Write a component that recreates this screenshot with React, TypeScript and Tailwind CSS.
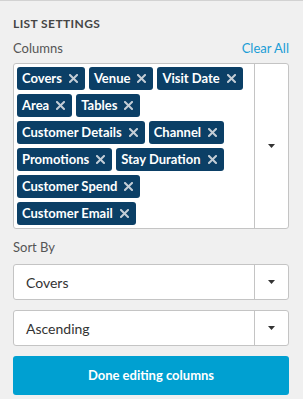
import React from "react";

const chips = [
  "Covers",
  "Venue",
  "Visit Date",
  "Area",
  "Tables",
  "Customer Details",
  "Channel",
  "Promotions",
  "Stay Duration",
  "Customer Spend",
  "Customer Email",
];

function Caret() {
  return (
    <svg width="7" height="4" viewBox="0 0 7 4">
      <path d="M0 0 L7 0 L3.5 4 Z" fill="#333" />
    </svg>
  );
}

function XIcon() {
  return (
    <svg width="9" height="9" viewBox="0 0 9 9">
      <path d="M1 1 L8 8 M8 1 L1 8" stroke="#c3cdd6" strokeWidth="2" strokeLinecap="square" />
    </svg>
  );
}

function Select({ value }: { value: string }) {
  return (
    <div className="flex h-[36px] rounded-[3px] border border-[#c4c4c4] bg-white">
      <div className="flex flex-1 items-center pl-[12px] text-[14px] text-[#333]">{value}</div>
      <div className="flex w-[34px] items-center justify-center border-l border-[#c4c4c4]">
        <Caret />
      </div>
    </div>
  );
}

export default function App() {
  return (
    <div
      className="h-[399px] w-[303px] border-t border-[#d2d2d2] bg-[#f0f0f0] pl-[13px] pr-[14px]"
      style={{ fontFamily: "Lato, 'Open Sans', sans-serif" }}
    >
      <div className="pt-[15px] text-[12px] font-bold leading-[16px] tracking-[0.4px] text-[#454545]">
        LIST SETTINGS
      </div>
      <div className="mt-[7px] flex items-center justify-between text-[13px] leading-[18px]">
        <span className="text-[#555]">Columns</span>
        <span className="text-[#1a9dd6]">Clear All</span>
      </div>
      <div className="mt-[6px] flex h-[166px] rounded-[3px] border border-[#c4c4c4] bg-white">
        <div className="flex flex-1 flex-wrap content-start gap-[4px] p-[3px]">
          {chips.map((c) => (
            <div
              key={c}
              className="flex h-[23px] items-center gap-[7px] rounded-[3px] bg-[#0b3f66] pl-[5px] pr-[7px] text-[13px] font-bold text-white"
            >
              <span>{c}</span>
              <XIcon />
            </div>
          ))}
        </div>
        <div className="flex w-[34px] items-center justify-center border-l border-[#c4c4c4]">
          <Caret />
        </div>
      </div>
      <div className="mt-[9px] text-[13px] leading-[18px] text-[#555]">Sort By</div>
      <div className="mt-[8px]">
        <Select value="Covers" />
      </div>
      <div className="mt-[10px]">
        <Select value="Ascending" />
      </div>
      <button className="mt-[10px] flex h-[39px] w-full items-center justify-center rounded-[3px] bg-[#00a0d1] text-[13px] font-bold text-white">
        Done editing columns
      </button>
    </div>
  );
}
